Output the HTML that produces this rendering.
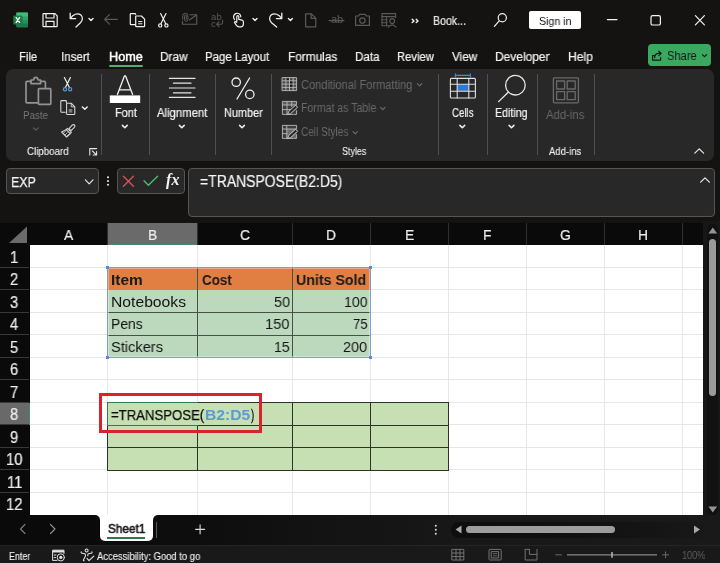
<!DOCTYPE html>
<html><head><meta charset="utf-8"><title>Excel</title>
<style>
*{box-sizing:border-box;margin:0;padding:0}
html,body{width:720px;height:563px;overflow:hidden;background:#141312;font-family:"Liberation Sans",sans-serif}
#root{position:relative;width:720px;height:563px;background:#141312;overflow:hidden}
.a{position:absolute}
.t{position:absolute;white-space:nowrap;transform-origin:0 50%;will-change:transform}
svg{position:absolute;overflow:visible}
#ribbon{position:absolute;left:6px;top:69px;width:708px;height:91.8px;background:#282828;border-radius:7px}
.sep{position:absolute;width:1px;background:#505050;top:74px;height:81px}
.box{position:absolute;background:#282828;border:1px solid #555;border-radius:4px}
.ch{position:absolute;top:223px;height:22px;background:#0a0a0a}
.vl{position:absolute;top:245px;width:1px;height:270px;background:#e7e7e7}
.hl{position:absolute;left:30px;height:1px;width:673px;background:#e7e7e7}

</style></head><body><div id="root">
<!-- ===== RIBBON PANEL ===== -->
<div id="ribbon"></div>
<div class="sep" style="left:101px"></div>
<div class="sep" style="left:149px"></div>
<div class="sep" style="left:215px"></div>
<div class="sep" style="left:270.5px"></div>
<div class="sep" style="left:438px"></div>
<div class="sep" style="left:487px"></div>
<div class="sep" style="left:536.5px"></div>
<div class="sep" style="left:594px"></div>

<!-- home underline -->
<div class="a" style="left:109px;top:64.5px;width:34px;height:2px;background:#4caf73;border-radius:1px"></div>

<!-- sign in button -->
<div class="a" style="left:528.6px;top:11.2px;width:52.6px;height:17.5px;background:#fff;border-radius:2px"></div>
<!-- share button -->
<div class="a" style="left:647.5px;top:44.3px;width:63.5px;height:21.8px;background:#3ba862;border-radius:4px"></div>

<!-- ===== FORMULA BAR ===== -->
<div class="box" style="left:6px;top:168px;width:92.5px;height:25.8px"></div>
<div class="box" style="left:117px;top:168px;width:67.5px;height:25.8px"></div>
<div class="box" style="left:188px;top:168px;width:527px;height:49px"></div>

<!-- ===== GRID ===== -->
<div class="a" style="left:0;top:223px;width:703px;height:292px;background:#fff"></div>
<div class="a" style="left:0;top:223px;width:703px;height:22px;background:#0a0a0a"></div>
<div class="a" style="left:0;top:223px;width:29.5px;height:292px;background:#0a0a0a"></div>
<div class="a" style="left:703px;top:221px;width:17px;height:296px;background:#171717"></div>
<div class="a" style="left:707.4px;top:224px;width:10.8px;height:291px;background:#111;border-radius:5.4px"></div>
<!-- selected col header B -->
<div class="a" style="left:107.5px;top:223px;width:90px;height:21.5px;background:#6a6a6a"></div>
<div class="a" style="left:107.5px;top:244px;width:90px;height:1.2px;background:#3f8f62"></div>
<!-- selected row header 8 -->
<div class="a" style="left:0;top:402.5px;width:29px;height:22.5px;background:#696969"></div>
<div class="a" style="left:28.5px;top:403px;width:1.2px;height:22px;background:#3f8f62"></div>
<div class="a" style="left:107.0px;top:223px;width:1px;height:22px;background:#303030"></div>
<div class="a" style="left:197.0px;top:223px;width:1px;height:22px;background:#303030"></div>
<div class="a" style="left:292.0px;top:223px;width:1px;height:22px;background:#303030"></div>
<div class="a" style="left:370.0px;top:223px;width:1px;height:22px;background:#303030"></div>
<div class="a" style="left:448.0px;top:223px;width:1px;height:22px;background:#303030"></div>
<div class="a" style="left:526.0px;top:223px;width:1px;height:22px;background:#303030"></div>
<div class="a" style="left:604.0px;top:223px;width:1px;height:22px;background:#303030"></div>
<div class="a" style="left:682.0px;top:223px;width:1px;height:22px;background:#303030"></div>
<div class="vl" style="left:107.0px"></div>
<div class="vl" style="left:197.0px"></div>
<div class="vl" style="left:292.0px"></div>
<div class="vl" style="left:370.0px"></div>
<div class="vl" style="left:448.0px"></div>
<div class="vl" style="left:526.0px"></div>
<div class="vl" style="left:604.0px"></div>
<div class="vl" style="left:682.0px"></div>
<div class="hl" style="top:266.8px"></div>
<div class="hl" style="top:289.3px"></div>
<div class="hl" style="top:311.8px"></div>
<div class="hl" style="top:334.3px"></div>
<div class="hl" style="top:356.8px"></div>
<div class="hl" style="top:379.3px"></div>
<div class="hl" style="top:401.8px"></div>
<div class="hl" style="top:424.3px"></div>
<div class="hl" style="top:446.8px"></div>
<div class="hl" style="top:469.3px"></div>
<div class="hl" style="top:491.8px"></div>
<div class="a" style="left:0;top:266.8px;width:29px;height:1px;background:#383838"></div>
<div class="a" style="left:0;top:289.3px;width:29px;height:1px;background:#383838"></div>
<div class="a" style="left:0;top:311.8px;width:29px;height:1px;background:#383838"></div>
<div class="a" style="left:0;top:334.3px;width:29px;height:1px;background:#383838"></div>
<div class="a" style="left:0;top:356.8px;width:29px;height:1px;background:#383838"></div>
<div class="a" style="left:0;top:379.3px;width:29px;height:1px;background:#383838"></div>
<div class="a" style="left:0;top:401.8px;width:29px;height:1px;background:#383838"></div>
<div class="a" style="left:0;top:424.3px;width:29px;height:1px;background:#383838"></div>
<div class="a" style="left:0;top:446.8px;width:29px;height:1px;background:#383838"></div>
<div class="a" style="left:0;top:469.3px;width:29px;height:1px;background:#383838"></div>
<div class="a" style="left:0;top:491.8px;width:29px;height:1px;background:#383838"></div>
<!-- corner triangle -->
<svg style="left:0;top:223px" width="30" height="22"><path d="M27 3.5 L27 20 L9 20 Z" fill="#6b6b6b"/></svg>

<!-- ===== TABLE 1 ===== -->
<div class="a" style="left:108px;top:267.5px;width:262.5px;height:22.5px;background:#e07f41"></div>
<div class="a" style="left:108px;top:290px;width:262.5px;height:67.5px;background:#bcd8bd"></div>
<!-- inner borders -->
<div class="a" style="left:197px;top:267.5px;width:1px;height:90px;background:#455347"></div>
<div class="a" style="left:292px;top:267.5px;width:1px;height:90px;background:#455347"></div>
<div class="a" style="left:108px;top:312px;width:262.5px;height:1px;background:#455347"></div>
<div class="a" style="left:108px;top:334.5px;width:262.5px;height:1px;background:#455347"></div>
<!-- blue range border -->
<div class="a" style="left:107px;top:266.5px;width:264px;height:91.5px;border:1.4px solid #7d9cd9;box-shadow:inset 0 0 0 0.8px rgba(255,255,255,.45)"></div>
<div class="a" style="left:106.2px;top:266.1px;width:3.2px;height:3.2px;background:#5f86d2"></div>
<div class="a" style="left:368.8px;top:266.1px;width:3.2px;height:3.2px;background:#5f86d2"></div>
<div class="a" style="left:106.2px;top:355.8px;width:3.2px;height:3.2px;background:#5f86d2"></div>
<div class="a" style="left:368.8px;top:355.8px;width:3.2px;height:3.2px;background:#5f86d2"></div>

<!-- ===== TABLE 2 ===== -->
<div class="a" style="left:107.5px;top:402.5px;width:341px;height:67.5px;background:#c6e0b4"></div>
<div class="a" style="left:107px;top:402px;width:342px;height:68.5px;border:1px solid #2d3328"></div>
<div class="a" style="left:107px;top:424.8px;width:342px;height:1px;background:#2d3328"></div>
<div class="a" style="left:107px;top:447.3px;width:342px;height:1px;background:#2d3328"></div>
<div class="a" style="left:197px;top:425px;width:1px;height:45px;background:#2d3328"></div>
<div class="a" style="left:292px;top:402px;width:1px;height:68px;background:#2d3328"></div>
<div class="a" style="left:370px;top:402px;width:1px;height:68px;background:#2d3328"></div>
<!-- active cell B8 -->
<div class="a" style="left:107px;top:402px;width:90.5px;height:24px;border:1.5px solid #2f7d4f;border-right:none"></div>
<!-- red highlight box -->
<div class="a" style="left:98.8px;top:393px;width:163.2px;height:39.5px;border:3px solid #d8232d"></div>

<!-- ===== SHEET TAB BAR ===== -->
<div class="a" style="left:90px;top:515px;width:75px;height:8px;background:#fff"></div>
<div class="a" style="left:0;top:515.3px;width:100.2px;height:29.7px;background:#0a0a0a;border-radius:0 5px 0 0"></div>
<div class="a" style="left:152.8px;top:515.3px;width:567.2px;height:29.7px;background:linear-gradient(90deg,#0c0c0c 0%,#0d0d0d 5%,#181818 55%,#191919 100%);border-radius:5px 0 0 0"></div>
<div class="a" style="left:100px;top:541px;width:53px;height:4px;background:#0b0b0b"></div>
<div class="a" style="left:100px;top:515px;width:53px;height:26px;background:#fff;border-radius:0 0 5px 5px"></div>
<div class="a" style="left:107.2px;top:536.6px;width:37.6px;height:2px;background:#2a7a4b"></div>
<div class="a" style="left:156px;top:521.7px;width:1px;height:16.3px;background:#5a5a5a"></div>
<svg style="left:0;top:515px" width="720" height="30" fill="none" stroke-linecap="round" stroke-linejoin="round">
 <path d="M25 9.5 L20.5 14 L25 18.5" stroke="#7c7c7c" stroke-width="1.1"/>
 <path d="M50.5 9.5 L55 14 L50.5 18.5" stroke="#8c8c8c" stroke-width="1.2"/>
 <path d="M195.6 14.3 H204.6 M200.1 9.8 V18.8" stroke="#d8d8d8" stroke-width="1.15"/>
 <circle cx="435.8" cy="10.8" r="1" fill="#e0e0e0"/><circle cx="435.8" cy="14.8" r="1" fill="#e0e0e0"/><circle cx="435.8" cy="18.8" r="1" fill="#e0e0e0"/>
</svg>
<!-- h scrollbar -->
<div class="a" style="left:451px;top:521.5px;width:254px;height:16px;background:linear-gradient(90deg,#0d0d0d 0%,#101010 50%,#181818 100%);border-radius:8px 0 0 8px"></div>
<div class="a" style="left:466px;top:525.8px;width:149px;height:7.6px;background:#9d9d9d;border-radius:4px"></div>
<svg style="left:0;top:515px" width="720" height="30"><path d="M461.5 10.5 L461.5 18.5 L455.5 14.5 Z" fill="#a8a8a8"/><path d="M694 10.5 L694 18.5 L700 14.5 Z" fill="#a8a8a8"/></svg>
<!-- v scrollbar -->
<div class="a" style="left:709.2px;top:238.6px;width:7.2px;height:157.4px;background:#9a9a9a;border-radius:3.6px"></div>
<svg style="left:0;top:0" width="720" height="563"><path d="M708.4 233.6 L717.2 233.6 L712.8 227.6 Z" fill="#959595"/><path d="M708.4 506.4 L717.2 506.4 L712.8 512.4 Z" fill="#959595"/></svg>

<!-- ===== STATUS BAR ===== -->
<div class="a" style="left:0;top:544.5px;width:720px;height:18.5px;background:#191919;border-top:1px solid #242424"></div>
<!-- ===== TITLE BAR ICONS ===== -->
<svg style="left:0;top:0" width="720" height="40" fill="none" stroke-linecap="round" stroke-linejoin="round">
 <!-- excel -->
 <rect x="16.4" y="12.6" width="11.6" height="14.6" rx="1.2" fill="#2fa565"/>
 <rect x="16.4" y="12.6" width="11.6" height="3.8" fill="#3dbd78"/>
 <rect x="16.4" y="20" width="11.6" height="3.6" fill="#23925a"/>
 <rect x="16.4" y="23.6" width="11.6" height="3.6" rx="1" fill="#1b7a49"/>
 <rect x="13.3" y="15.4" width="9.2" height="9.2" rx="1" fill="#1d7a49"/>
 <path d="M16.2 17.6 L19.6 22.4 M19.6 17.6 L16.2 22.4" stroke="#fff" stroke-width="1.3"/>
 <!-- save -->
 <g stroke="#f0f0f0" stroke-width="1.2">
  <path d="M43 14.2 Q43 13.6 43.6 13.6 H55 L57.2 15.8 V26 Q57.2 26.6 56.6 26.6 H43.6 Q43 26.6 43 26 Z"/>
  <path d="M46 13.8 V18 H54 V13.8"/>
  <path d="M46 26.4 V21.4 H54 V26.4"/>
 </g>
 <!-- undo -->
 <g stroke="#f0f0f0" stroke-width="1.3">
  <path d="M70.2 13.2 V18.6 H75.6"/>
  <path d="M70.6 18.2 C73 14.4 77.6 12.6 80.6 14.8 C83.4 17 82.6 20.6 80.4 22.8 L76 27"/>
  <path d="M89 18.6 L91 20.6 L93 18.6" stroke-width="1.4"/>
 </g>
 <!-- back arrow dim -->
 <g stroke="#5a5a5a" stroke-width="1.2">
  <path d="M104.6 19.4 H117.2 M109.4 14.6 L104.6 19.4 L109.4 24.2"/>
 </g>
 <!-- copy -->
 <g stroke="#f0f0f0" stroke-width="1.2">
  <path d="M135.4 24.6 H131 Q130.3 24.6 130.3 23.9 V14.3 Q130.3 13.6 131 13.6 H135 Q135.6 13.6 135.6 14.3"/>
  <path d="M136 16 H141.4 L144.6 19.2 V25.9 Q144.6 26.6 143.9 26.6 H136.4 Q135.7 26.6 135.7 25.9 V16.3 Z"/>
  <path d="M138.6 21.6 H142 M138.6 23.8 H142" stroke-width="1"/>
 </g>
 <!-- scissors -->
 <g stroke="#f0f0f0" stroke-width="1.2">
  <path d="M160.6 13.6 L165.6 23.6 M166 13.6 L161 23.6"/>
  <circle cx="160.2" cy="25.4" r="1.6"/><circle cx="166.4" cy="25.4" r="1.6"/>
 </g>
 <!-- mail w/ clip dim -->
 <g stroke="#5c5c5c" stroke-width="1.1">
  <path d="M190 14.7 H196.7 V24.3 H182.5 V21.4"/>
  <path d="M196.4 15 L189.4 20"/>
  <path d="M182.7 19.4 V15.8 Q182.7 13.3 185.3 13.3 Q187.9 13.3 187.9 15.8 V19.4 Q187.9 21.3 186.2 21.3 Q184.5 21.3 184.5 19.4 V16.2 Q184.5 15 185.4 15 Q186.3 15 186.3 16.2 V19.2" stroke-width="1"/>
 </g>
 <!-- touch -->
 <g stroke="#f0f0f0" stroke-width="1.2">
  <path d="M234.6 19.6 C233 17.8 233.2 14.8 235.6 13.6 C238 12.6 240.8 14 240.8 16.8"/>
  <path d="M236.8 21.6 V16.6 Q236.8 15.6 237.8 15.6 Q238.8 15.6 238.8 16.6 V19.4 L242.2 20.2 Q243.4 20.6 243.4 21.8 V24 Q243.4 26.8 240.6 26.8 H239 Q237.4 26.8 236.4 25.4 L234.4 22.4 Q235.4 21 236.8 22.4"/>
  <path d="M253 18.6 L255 20.6 L257 18.6" stroke-width="1.4"/>
 </g>
 <!-- redo -->
 <g stroke="#f0f0f0" stroke-width="1.3">
  <path d="M281.8 13.2 V18.6 H276.4"/>
  <path d="M281.4 18.2 C279 14.4 274.4 12.6 271.4 14.8 C268.6 17 269.4 20.6 271.6 22.8 L276.6 27"/>
  <path d="M288.4 18.6 L290.4 20.6 L292.4 18.6" stroke-width="1.4"/>
 </g>
 <!-- new doc dim -->
 <g stroke="#5a5a5a" stroke-width="1.2">
  <path d="M305.6 13.8 H311.4 L315.8 18.2 V26.8 H305.6 Z"/>
  <path d="M311.2 14 V18.4 H315.6"/>
 </g>
 <!-- camera dim -->
 <g stroke="#5a5a5a" stroke-width="1.2">
  <path d="M355.6 16 H358.6 L359.6 14.4 H365.2 L366.2 16 H369.4 V25.4 H355.6 Z"/>
  <circle cx="362.4" cy="20.6" r="2.7"/>
 </g>
 <!-- table w/ person dim -->
 <g stroke="#5a5a5a" stroke-width="1.1">
  <path d="M389 25.8 H382 V13.6 H395.6 V17.4"/>
  <path d="M382 16.6 H395.6 M382 19.8 H387 M382 22.8 H387 M386.6 16.6 V25.8"/>
  <circle cx="392.2" cy="21" r="2.4"/>
  <path d="M388.4 27.2 Q392.2 22.6 396 27.2"/>
 </g>
 <!-- >> -->
 <g stroke="#f4f4f4" stroke-width="1.4">
  <path d="M412.2 19.2 L414 20.9 L412.2 22.6 M416.2 19.2 L418 20.9 L416.2 22.6"/>
 </g>
 <!-- search -->
 <g stroke="#f0f0f0" stroke-width="1.2">
  <circle cx="502.3" cy="17.8" r="4.1"/>
  <path d="M499.2 20.9 L494.4 26.4"/>
 </g>
 <!-- window controls -->
 <g stroke="#f4f4f4" stroke-width="1.2">
  <path d="M607.4 19.6 H617"/>
  <rect x="651" y="15.6" width="9.4" height="9.4" rx="1.6"/>
  <path d="M695.4 15.6 L704.4 24.8 M704.4 15.6 L695.4 24.8"/>
 </g>
</svg>
<!-- dim text icons -->
<div class="t" style="left:211px;top:12.4px;font-size:9.5px;line-height:9px;color:#5a5a5a;letter-spacing:0.3px">ab</div>
<div class="t" style="left:211px;top:19.4px;font-size:9.5px;line-height:9px;color:#5a5a5a">c</div>
<svg style="left:0;top:0" width="720" height="40" fill="none" stroke="#5a5a5a" stroke-width="1.1" stroke-linecap="round" stroke-linejoin="round">
 <path d="M222.6 20.2 V22.4 Q222.6 24.2 220.8 24.2 H216.8 M219 21.8 L216.6 24.2 L219 26.6"/>
 <path d="M329 20.6 H344"/>
</svg>
<div class="t" style="left:331px;top:14.2px;font-size:11px;line-height:11px;color:#5a5a5a">ab</div>
<!-- ===== RIBBON ICONS ===== -->
<svg style="left:0;top:0" width="720" height="170" fill="none" stroke-linecap="round" stroke-linejoin="round">
 <!-- paste (dim) -->
 <g stroke="#929292" stroke-width="1.7">
  <path d="M38 102.8 H27 Q26 102.8 26 101.8 V82.4 Q26 81.4 27 81.4 H31"/>
  <path d="M40.6 81.4 H44.4 Q45.4 81.4 45.4 82.4 V88"/>
  <path d="M31 83.6 V80 H33.6 Q33.8 77.4 35.8 77.4 Q37.8 77.4 38 80 H40.6 V83.6 Z"/>
  <rect x="38.4" y="88.6" width="12.4" height="15.8" rx="0.8"/>
 </g>
 <path d="M33.4 127.8 L35.8 130.2 L38.2 127.8" stroke="#5e5e5e" stroke-width="1.2"/>
 <!-- scissors -->
 <g stroke="#f0f0f0" stroke-width="1.2">
  <path d="M64.4 77.6 L69.4 87.4 M70.4 77.6 L65.4 87.4"/>
 </g>
 <g stroke="#5b9bd5" stroke-width="1.2">
  <circle cx="65" cy="89.2" r="1.6"/><circle cx="70.1" cy="89.2" r="1.6"/>
 </g>
 <!-- copy -->
 <g stroke="#dcdcdc" stroke-width="1.05">
  <path d="M65.2 112.2 H61.6 Q60.8 112.2 60.8 111.4 V101.4 Q60.8 100.6 61.6 100.6 H65.6 Q66.4 100.6 66.4 101.4 V102.4"/>
  <path d="M67.2 103.2 H71.2 L74.8 106.8 V113.8 Q74.8 114.4 74.2 114.4 H67.2 Q66.6 114.4 66.6 113.8 V103.8 Q66.6 103.2 67.2 103.2 Z"/>
  <path d="M71.2 103.4 V106.8 H74.6" stroke-width="0.9"/>
 </g>
 <rect x="68.7" y="109" width="3.6" height="3.6" fill="#7e7e7e"/>
 <path d="M82.4 107 L84.8 109.3 L87.2 107" stroke="#f0f0f0" stroke-width="1.5"/>
 <!-- format painter -->
 <g stroke="#d8d8d8" stroke-width="1.1">
  <path d="M74.4 125 Q75.6 126.2 74.4 127.4 L71 130.6 L69 128.6 L72.2 125.2 Q73.4 124 74.4 125 Z"/>
  <path d="M67.4 128.4 L71.4 132.4 L70.2 133.6 L66.2 129.6 Z"/>
  <path d="M66 129.8 L61.6 132 L66.6 137 L70 133.8"/>
  <path d="M63.6 133 L65.4 131.4 M65.2 134.8 L67.2 132.8 M66.8 136.2 L68.6 134.4" stroke-width="0.8"/>
 </g>
 <!-- launcher -->
 <g stroke="#e8e8e8" stroke-width="1.1">
  <path d="M96.6 148.6 H89.8 V155"/>
  <path d="M92.4 151 L96.4 154.8 M96.6 151.6 V155 H93.2"/>
 </g>
 <!-- Font A -->
 <g stroke="#f0f0f0" stroke-width="1.3">
  <path d="M117.4 94.4 L124.4 76 H125.6 L132.6 94.4 M119.4 89.8 H130.6"/>
 </g>
 <rect x="109.8" y="95.4" width="30.4" height="7.6" fill="#fff"/>
 <path d="M122.4 125.4 L124.8 127.8 L127.2 125.4" stroke="#f0f0f0" stroke-width="1.5"/>
 <!-- Alignment -->
 <g stroke="#e4e4e4" stroke-width="1.2">
  <path d="M169.4 78.4 H195 M173.4 83.2 H191 M169.4 88 H195 M173.4 92.8 H191 M169.4 97.4 H195"/>
 </g>
 <path d="M179.4 125.4 L181.8 127.8 L184.2 125.4" stroke="#f0f0f0" stroke-width="1.5"/>
 <!-- Number % -->
 <g stroke="#f0f0f0" stroke-width="1.3">
  <circle cx="236.2" cy="82.2" r="4.2"/>
  <circle cx="249.8" cy="94.4" r="4.2"/>
  <path d="M249.6 78 L237 99"/>
 </g>
 <path d="M239.6 125.4 L242 127.8 L244.4 125.4" stroke="#f0f0f0" stroke-width="1.5"/>
 <!-- Styles icons (dim) -->
 <rect x="282.4" y="77.6" width="14.2" height="13" fill="#4a4a4a"/>
 <rect x="289.4" y="80.8" width="3.8" height="6.6" fill="#161616"/>
 <rect x="286" y="77.8" width="3.4" height="3" fill="#222"/>
 <g stroke="#b4b4b4" stroke-width="0.95">
  <rect x="282.4" y="77.6" width="14.2" height="13"/>
  <path d="M282.4 80.8 H296.6 M282.4 84.1 H296.6 M282.4 87.4 H296.6 M285.9 77.6 V90.6 M289.5 77.6 V90.6 M293.1 77.6 V90.6"/>
 </g>
 <rect x="282.4" y="101.4" width="14.2" height="13" fill="#3c3c3c"/>
 <rect x="282.6" y="101.6" width="13.8" height="3.4" fill="#5a5a5a"/>
 <g stroke="#b4b4b4" stroke-width="0.95">
  <path d="M293 114.4 H282.4 V101.4 H296.6 V104.2"/>
  <path d="M282.4 105 H296.6 M282.4 109.6 H290.4 M287 101.4 V114.4 M291.8 101.4 V106.4 M296.6 110.6 V114.4 H294"/>
 </g>
 <rect x="282.4" y="125.4" width="14.2" height="13" fill="#3c3c3c"/>
 <rect x="287" y="129" width="9.4" height="9.2" fill="#6c6c6c"/>
 <g stroke="#b4b4b4" stroke-width="0.95">
  <path d="M293 138.4 H282.4 V125.4 H296.6 V128.2"/>
  <path d="M282.4 129 H296.6 M286.8 125.4 V138.4 M296.6 134.6 V138.4 H294 M282.4 133.6 H286.8"/>
 </g>
 <g stroke="#d0d0d0" stroke-width="0.95" fill="#262626">
  <path d="M295.8 105.4 L297.6 107.2 L290.6 113.6 L287.6 114.6 L288.6 111.8 Z"/>
  <path d="M295.8 129.4 L297.6 131.2 L290.6 137.6 L287.6 138.6 L288.6 135.8 Z"/>
 </g>
 <g stroke="#6f6f6f" stroke-width="1.1">
  <path d="M417.4 83.6 L419.6 85.8 L421.8 83.6"/>
  <path d="M380.6 107.4 L382.8 109.6 L385 107.4"/>
  <path d="M353 131.6 L355.2 133.8 L357.4 131.6"/>
 </g>
 <!-- Cells -->
 <path d="M455.4 75.4 H470.4 M455.4 73.8 V77 M470.4 73.8 V77" stroke="#3a8fd9" stroke-width="1.1"/>
 <rect x="457.2" y="84.2" width="11.6" height="7" fill="#2b7bd4"/>
 <g stroke="#e0e0e0" stroke-width="1.1">
  <rect x="450.4" y="78.4" width="25" height="19.6" rx="1"/>
  <path d="M450.4 84.2 H475.4 M450.4 91.2 H475.4 M457.2 78.4 V98 M468.8 78.4 V98"/>
 </g>
 <path d="M459.9 125.4 L462.3 127.8 L464.7 125.4" stroke="#f0f0f0" stroke-width="1.5"/>
 <!-- Editing magnifier -->
 <g stroke="#e8e8e8" stroke-width="1.3">
  <circle cx="515.4" cy="85.2" r="9.8"/>
  <path d="M508.2 92.2 L498.6 101.6"/>
 </g>
 <path d="M509.1 125.4 L511.5 127.8 L513.9 125.4" stroke="#f0f0f0" stroke-width="1.5"/>
 <!-- Add-ins (dim) -->
 <g stroke="#6a6a6a" stroke-width="1.3">
  <rect x="553.4" y="77.8" width="25" height="25" rx="1"/>
  <rect x="556.6" y="81" width="8" height="8"/>
  <rect x="567.2" y="81" width="8" height="8"/>
  <rect x="556.6" y="91.6" width="8" height="8"/>
  <rect x="567.2" y="91.6" width="8" height="8"/>
 </g>
 <!-- collapse ribbon -->
 <path d="M694.8 153.2 L699.2 148.8 L703.6 153.2" stroke="#e8e8e8" stroke-width="1.2"/>
</svg>
<!-- ===== FORMULA BAR ICONS ===== -->
<svg style="left:0;top:160px" width="720" height="60" fill="none" stroke-linecap="round" stroke-linejoin="round">
 <path d="M85.4 19.8 L89.2 23.8 L93 19.8" stroke="#e4e4e4" stroke-width="1.2"/>
 <circle cx="108" cy="17.2" r="1" fill="#f0f0f0"/><circle cx="108" cy="21" r="1" fill="#f0f0f0"/><circle cx="108" cy="24.8" r="1" fill="#f0f0f0"/>
 <path d="M123.4 16.2 L133.4 26.2 M133.4 16.2 L123.4 26.2" stroke="#d9535a" stroke-width="1.3"/>
 <path d="M144 20.8 L148.4 25.2 L157.6 16.2" stroke="#4fbf6f" stroke-width="1.3"/>
 <path d="M700.6 22.2 L705 17.8 L709.4 22.2" stroke="#e8e8e8" stroke-width="1.2"/>
</svg>
<div class="t" style="left:166.2px;top:171px;font-family:'Liberation Serif',serif;font-style:italic;font-weight:bold;font-size:16px;line-height:18px;color:#f4f4f4;letter-spacing:0.2px">fx</div>

<!-- ===== SHARE ICONS ===== -->
<svg style="left:0;top:40px" width="720" height="30" fill="none" stroke="#0e1a12" stroke-width="1.2" stroke-linecap="round" stroke-linejoin="round">
 <path d="M654.4 15.6 H652.6 V20.2 H660.6 V17.6"/>
 <path d="M654.6 17.6 Q655 13.6 658.4 13.4 H660.6 M658.8 11.2 L661.2 13.4 L658.8 15.6"/>
 <path d="M702.4 14.6 L704.5 16.7 L706.6 14.6"/>
</svg>

<!-- ===== STATUS BAR ICONS ===== -->
<svg style="left:0;top:540px" width="720" height="23" fill="none" stroke-linecap="round" stroke-linejoin="round">
 <!-- macro record -->
 <g stroke="#e4e4e4" stroke-width="1">
  <path d="M57 20.4 H52.6 V10.2 H64 V13.4"/>
  <path d="M52.6 11.4 H64" stroke-width="2.2" stroke-linecap="butt"/>
  <path d="M54.2 15 H56 M54.2 17.6 H55.6"/>
  <circle cx="60.8" cy="17.4" r="3.6"/>
 </g>
 <circle cx="60.8" cy="17.4" r="1.6" fill="#e4e4e4"/>
 <!-- accessibility -->
 <g stroke="#e4e4e4" stroke-width="1.05">
  <circle cx="86.6" cy="10.4" r="1.5"/>
  <path d="M81.2 11.8 Q80.8 13 82 13.2 L84.8 13.8 Q85.4 14 85.4 14.8 V16.2 L83.4 20 Q83.2 21 84.2 20.8"/>
  <path d="M92 11.8 Q92.4 13 91.2 13.2 L88.4 13.8 Q87.8 14 87.8 14.8 V15.8"/>
  <path d="M87 18.4 L89 20.6 L93.8 16.2" stroke-width="1.15"/>
 </g>
 <!-- view buttons -->
 <g stroke="#727272" stroke-width="1">
  <rect x="452.2" y="9.4" width="11.6" height="10.6"/>
  <path d="M452.2 13 H463.8 M452.2 16.6 H463.8 M456 9.4 V20 M460 9.4 V20"/>
  <rect x="489" y="9.4" width="12.2" height="10.6" rx="1"/>
  <rect x="491.6" y="11.6" width="7" height="6.4"/>
  <path d="M493.2 13.6 H497 M493.2 15.8 H497" stroke-width="0.8"/>
  <path d="M525.2 9.4 V20 H537 V9.4"/>
  <path d="M529.4 9.4 V14.4 H537 M525.2 9.4 H529.4"/>
 </g>
 <g stroke="#6a6a6a" stroke-width="1">
  <path d="M555.8 14.8 H561.4"/>
  <path d="M662.6 14.8 H668.6 M665.6 11.8 V17.8"/>
 </g>
 <path d="M567.4 14.9 H656.6" stroke="#a4a4a4" stroke-width="1"/>
 <path d="M612 12 V17.8" stroke="#b0b0b0" stroke-width="1.6" stroke-linecap="butt"/>
</svg>

<div class="t" style="left:433px;top:13.00px;font-family:'Liberation Sans', sans-serif;font-size:12px;line-height:16px;color:#e8e8e8;font-weight:normal;transform:scaleX(0.8833);-webkit-text-stroke:0.22px #e8e8e8;">Book...</div>
<div class="t" style="left:539px;top:14.00px;font-family:'Liberation Sans', sans-serif;font-size:11px;line-height:14px;color:#111;font-weight:normal;transform:scaleX(0.9661);">Sign in</div>
<div class="t" style="left:18.7px;top:49.00px;font-family:'Liberation Sans', sans-serif;font-size:12.5px;line-height:16px;color:#f2f2f2;font-weight:normal;transform:scaleX(0.8980);-webkit-text-stroke:0.22px #f2f2f2;">File</div>
<div class="t" style="left:61.2px;top:49.00px;font-family:'Liberation Sans', sans-serif;font-size:12.5px;line-height:16px;color:#f2f2f2;font-weight:normal;transform:scaleX(0.9211);-webkit-text-stroke:0.22px #f2f2f2;">Insert</div>
<div class="t" style="left:108.7px;top:49.00px;font-family:'Liberation Sans', sans-serif;font-size:12.5px;line-height:16px;color:#fff;font-weight:normal;transform:scaleX(1.0137);-webkit-text-stroke:0.45px #fff;">Home</div>
<div class="t" style="left:159.5px;top:49.00px;font-family:'Liberation Sans', sans-serif;font-size:12.5px;line-height:16px;color:#f2f2f2;font-weight:normal;transform:scaleX(0.9427);-webkit-text-stroke:0.22px #f2f2f2;">Draw</div>
<div class="t" style="left:205px;top:49.00px;font-family:'Liberation Sans', sans-serif;font-size:12.5px;line-height:16px;color:#f2f2f2;font-weight:normal;transform:scaleX(0.9159);-webkit-text-stroke:0.22px #f2f2f2;">Page Layout</div>
<div class="t" style="left:288.2px;top:49.00px;font-family:'Liberation Sans', sans-serif;font-size:12.5px;line-height:16px;color:#f2f2f2;font-weight:normal;transform:scaleX(0.9464);-webkit-text-stroke:0.22px #f2f2f2;">Formulas</div>
<div class="t" style="left:355px;top:49.00px;font-family:'Liberation Sans', sans-serif;font-size:12.5px;line-height:16px;color:#f2f2f2;font-weight:normal;transform:scaleX(0.9278);-webkit-text-stroke:0.22px #f2f2f2;">Data</div>
<div class="t" style="left:397px;top:49.00px;font-family:'Liberation Sans', sans-serif;font-size:12.5px;line-height:16px;color:#f2f2f2;font-weight:normal;transform:scaleX(0.8976);-webkit-text-stroke:0.22px #f2f2f2;">Review</div>
<div class="t" style="left:451.7px;top:49.00px;font-family:'Liberation Sans', sans-serif;font-size:12.5px;line-height:16px;color:#f2f2f2;font-weight:normal;transform:scaleX(0.9414);-webkit-text-stroke:0.22px #f2f2f2;">View</div>
<div class="t" style="left:495px;top:49.00px;font-family:'Liberation Sans', sans-serif;font-size:12.5px;line-height:16px;color:#f2f2f2;font-weight:normal;transform:scaleX(0.9564);-webkit-text-stroke:0.22px #f2f2f2;">Developer</div>
<div class="t" style="left:568px;top:49.00px;font-family:'Liberation Sans', sans-serif;font-size:12.5px;line-height:16px;color:#f2f2f2;font-weight:normal;transform:scaleX(0.9721);-webkit-text-stroke:0.22px #f2f2f2;">Help</div>
<div class="t" style="left:666.6px;top:48.00px;font-family:'Liberation Sans', sans-serif;font-size:12.3px;line-height:16px;color:#0e1a12;font-weight:normal;transform:scaleX(0.9017);">Share</div>
<div class="t" style="left:23.3px;top:108.00px;font-family:'Liberation Sans', sans-serif;font-size:11.5px;line-height:14px;color:#777;font-weight:normal;transform:scaleX(0.8497);">Paste</div>
<div class="t" style="left:26.7px;top:144.00px;font-family:'Liberation Sans', sans-serif;font-size:11px;line-height:14px;color:#f2f2f2;font-weight:normal;transform:scaleX(0.8833);-webkit-text-stroke:0.12px #f2f2f2;">Clipboard</div>
<div class="t" style="left:114.6px;top:105.00px;font-family:'Liberation Sans', sans-serif;font-size:12px;line-height:16px;color:#f2f2f2;font-weight:normal;transform:scaleX(0.9119);-webkit-text-stroke:0.22px #f2f2f2;">Font</div>
<div class="t" style="left:157.3px;top:105.00px;font-family:'Liberation Sans', sans-serif;font-size:12px;line-height:16px;color:#f2f2f2;font-weight:normal;transform:scaleX(0.9443);-webkit-text-stroke:0.22px #f2f2f2;">Alignment</div>
<div class="t" style="left:223.7px;top:105.00px;font-family:'Liberation Sans', sans-serif;font-size:12px;line-height:16px;color:#f2f2f2;font-weight:normal;transform:scaleX(0.9089);-webkit-text-stroke:0.22px #f2f2f2;">Number</div>
<div class="t" style="left:300.7px;top:77.00px;font-family:'Liberation Sans', sans-serif;font-size:12px;line-height:16px;color:#696969;font-weight:normal;transform:scaleX(0.9219);">Conditional Formatting</div>
<div class="t" style="left:300.7px;top:100.00px;font-family:'Liberation Sans', sans-serif;font-size:12px;line-height:16px;color:#696969;font-weight:normal;transform:scaleX(0.8773);">Format as Table</div>
<div class="t" style="left:300.7px;top:124.00px;font-family:'Liberation Sans', sans-serif;font-size:12px;line-height:16px;color:#696969;font-weight:normal;transform:scaleX(0.8344);">Cell Styles</div>
<div class="t" style="left:342px;top:144.00px;font-family:'Liberation Sans', sans-serif;font-size:11px;line-height:14px;color:#f2f2f2;font-weight:normal;transform:scaleX(0.8108);-webkit-text-stroke:0.12px #f2f2f2;">Styles</div>
<div class="t" style="left:451.7px;top:105.00px;font-family:'Liberation Sans', sans-serif;font-size:12px;line-height:16px;color:#f2f2f2;font-weight:normal;transform:scaleX(0.8061);-webkit-text-stroke:0.22px #f2f2f2;">Cells</div>
<div class="t" style="left:495.4px;top:105.00px;font-family:'Liberation Sans', sans-serif;font-size:12px;line-height:16px;color:#f2f2f2;font-weight:normal;transform:scaleX(0.8882);-webkit-text-stroke:0.22px #f2f2f2;">Editing</div>
<div class="t" style="left:546.4px;top:107.00px;font-family:'Liberation Sans', sans-serif;font-size:12px;line-height:16px;color:#696969;font-weight:normal;transform:scaleX(0.9413);">Add-ins</div>
<div class="t" style="left:548.8px;top:144.00px;font-family:'Liberation Sans', sans-serif;font-size:11px;line-height:14px;color:#f2f2f2;font-weight:normal;transform:scaleX(0.8633);-webkit-text-stroke:0.12px #f2f2f2;">Add-ins</div>
<div class="t" style="left:11.3px;top:172.00px;font-family:'Liberation Sans', sans-serif;font-size:15px;line-height:19px;color:#f6f6f6;font-weight:normal;transform:scaleX(0.8296);-webkit-text-stroke:0.25px #f6f6f6;">EXP</div>
<div class="t" style="left:199.6px;top:172.00px;font-family:'Liberation Sans', sans-serif;font-size:15.6px;line-height:19px;color:#f6f6f6;font-weight:normal;transform:scaleX(0.8949);-webkit-text-stroke:0.2px #f6f6f6;">=TRANSPOSE(B2:D5)</div>
<div class="t" style="left:64.18046875px;top:225.00px;font-family:'Liberation Sans', sans-serif;font-size:15.4px;line-height:19px;color:#ededed;font-weight:normal;transform:scaleX(0.9000);-webkit-text-stroke:0.22px #ededed;">A</div>
<div class="t" style="left:148.08046875px;top:225.00px;font-family:'Liberation Sans', sans-serif;font-size:15.4px;line-height:19px;color:#ededed;font-weight:normal;transform:scaleX(0.9000);-webkit-text-stroke:0.22px #ededed;">B</div>
<div class="t" style="left:239.89375px;top:225.00px;font-family:'Liberation Sans', sans-serif;font-size:15.4px;line-height:19px;color:#ededed;font-weight:normal;transform:scaleX(0.9000);-webkit-text-stroke:0.22px #ededed;">C</div>
<div class="t" style="left:326.29375px;top:225.00px;font-family:'Liberation Sans', sans-serif;font-size:15.4px;line-height:19px;color:#ededed;font-weight:normal;transform:scaleX(0.9000);-webkit-text-stroke:0.22px #ededed;">D</div>
<div class="t" style="left:404.68046875px;top:225.00px;font-family:'Liberation Sans', sans-serif;font-size:15.4px;line-height:19px;color:#ededed;font-weight:normal;transform:scaleX(0.9000);-webkit-text-stroke:0.22px #ededed;">E</div>
<div class="t" style="left:483.0671875px;top:225.00px;font-family:'Liberation Sans', sans-serif;font-size:15.4px;line-height:19px;color:#ededed;font-weight:normal;transform:scaleX(0.9000);-webkit-text-stroke:0.22px #ededed;">F</div>
<div class="t" style="left:559.9070312499999px;top:225.00px;font-family:'Liberation Sans', sans-serif;font-size:15.4px;line-height:19px;color:#ededed;font-weight:normal;transform:scaleX(0.9000);-webkit-text-stroke:0.22px #ededed;">G</div>
<div class="t" style="left:638.2937499999999px;top:225.00px;font-family:'Liberation Sans', sans-serif;font-size:15.4px;line-height:19px;color:#ededed;font-weight:normal;transform:scaleX(0.9000);-webkit-text-stroke:0.22px #ededed;">H</div>
<div class="t" style="left:10.403125px;top:248.00px;font-family:'Liberation Sans', sans-serif;font-size:16px;line-height:19px;color:#ededed;font-weight:normal;transform:scaleX(0.9200);-webkit-text-stroke:0.22px #ededed;">1</div>
<div class="t" style="left:10.403125px;top:270.00px;font-family:'Liberation Sans', sans-serif;font-size:16px;line-height:19px;color:#ededed;font-weight:normal;transform:scaleX(0.9200);-webkit-text-stroke:0.22px #ededed;">2</div>
<div class="t" style="left:10.403125px;top:293.00px;font-family:'Liberation Sans', sans-serif;font-size:16px;line-height:19px;color:#ededed;font-weight:normal;transform:scaleX(0.9200);-webkit-text-stroke:0.22px #ededed;">3</div>
<div class="t" style="left:10.403125px;top:315.00px;font-family:'Liberation Sans', sans-serif;font-size:16px;line-height:19px;color:#ededed;font-weight:normal;transform:scaleX(0.9200);-webkit-text-stroke:0.22px #ededed;">4</div>
<div class="t" style="left:10.403125px;top:338.00px;font-family:'Liberation Sans', sans-serif;font-size:16px;line-height:19px;color:#ededed;font-weight:normal;transform:scaleX(0.9200);-webkit-text-stroke:0.22px #ededed;">5</div>
<div class="t" style="left:10.403125px;top:360.00px;font-family:'Liberation Sans', sans-serif;font-size:16px;line-height:19px;color:#ededed;font-weight:normal;transform:scaleX(0.9200);-webkit-text-stroke:0.22px #ededed;">6</div>
<div class="t" style="left:10.403125px;top:383.00px;font-family:'Liberation Sans', sans-serif;font-size:16px;line-height:19px;color:#ededed;font-weight:normal;transform:scaleX(0.9200);-webkit-text-stroke:0.22px #ededed;">7</div>
<div class="t" style="left:10.403125px;top:405.00px;font-family:'Liberation Sans', sans-serif;font-size:16px;line-height:19px;color:#ededed;font-weight:normal;transform:scaleX(0.9200);-webkit-text-stroke:0.22px #ededed;">8</div>
<div class="t" style="left:10.403125px;top:428.00px;font-family:'Liberation Sans', sans-serif;font-size:16px;line-height:19px;color:#ededed;font-weight:normal;transform:scaleX(0.9200);-webkit-text-stroke:0.22px #ededed;">9</div>
<div class="t" style="left:6.313437499999999px;top:450.00px;font-family:'Liberation Sans', sans-serif;font-size:16px;line-height:19px;color:#ededed;font-weight:normal;transform:scaleX(0.9200);-webkit-text-stroke:0.22px #ededed;">10</div>
<div class="t" style="left:6.8596875px;top:473.00px;font-family:'Liberation Sans', sans-serif;font-size:16px;line-height:19px;color:#ededed;font-weight:normal;transform:scaleX(0.9200);-webkit-text-stroke:0.22px #ededed;">11</div>
<div class="t" style="left:6.313437499999999px;top:495.00px;font-family:'Liberation Sans', sans-serif;font-size:16px;line-height:19px;color:#ededed;font-weight:normal;transform:scaleX(0.9200);-webkit-text-stroke:0.22px #ededed;">12</div>
<div class="t" style="left:107.6px;top:521.00px;font-family:'Liberation Sans', sans-serif;font-size:12.5px;line-height:16px;color:#1a1a1a;font-weight:normal;transform:scaleX(0.9413);-webkit-text-stroke:0.6px #1a1a1a;">Sheet1</div>
<div class="t" style="left:9.3px;top:549.00px;font-family:'Liberation Sans', sans-serif;font-size:10.5px;line-height:14px;color:#f2f2f2;font-weight:normal;transform:scaleX(0.8483);-webkit-text-stroke:0.12px #f2f2f2;">Enter</div>
<div class="t" style="left:97.2px;top:549.00px;font-family:'Liberation Sans', sans-serif;font-size:10.5px;line-height:14px;color:#f2f2f2;font-weight:normal;transform:scaleX(0.8984);-webkit-text-stroke:0.12px #f2f2f2;">Accessibility: Good to go</div>
<div class="t" style="left:681.9px;top:548.00px;font-family:'Liberation Sans', sans-serif;font-size:10.5px;line-height:14px;color:#606060;font-weight:normal;transform:scaleX(0.8675);">100%</div>
<div class="t" style="left:111px;top:270.00px;font-family:'Liberation Sans', sans-serif;font-size:15.2px;line-height:19px;color:#1a1a1a;font-weight:bold;transform:scaleX(1.0149);">Item</div>
<div class="t" style="left:201.5px;top:270.00px;font-family:'Liberation Sans', sans-serif;font-size:15.2px;line-height:19px;color:#1a1a1a;font-weight:bold;transform:scaleX(0.8800);">Cost</div>
<div class="t" style="left:295.8px;top:270.00px;font-family:'Liberation Sans', sans-serif;font-size:15.2px;line-height:19px;color:#1a1a1a;font-weight:bold;transform:scaleX(0.9348);">Units Sold</div>
<div class="t" style="left:111px;top:292.00px;font-family:'Liberation Sans', sans-serif;font-size:15.2px;line-height:19px;color:#141414;font-weight:normal;transform:scaleX(1.0329);">Notebooks</div>
<div class="t" style="left:111px;top:314.00px;font-family:'Liberation Sans', sans-serif;font-size:15.2px;line-height:19px;color:#141414;font-weight:normal;transform:scaleX(0.9155);">Pens</div>
<div class="t" style="left:111px;top:337.00px;font-family:'Liberation Sans', sans-serif;font-size:15.2px;line-height:19px;color:#141414;font-weight:normal;transform:scaleX(0.9627);">Stickers</div>
<div class="t" style="left:273.5px;top:292.00px;font-family:'Liberation Sans', sans-serif;font-size:15.2px;line-height:19px;color:#141414;font-weight:normal;transform:scaleX(0.9523);">50</div>
<div class="t" style="left:265.2px;top:314.00px;font-family:'Liberation Sans', sans-serif;font-size:15.2px;line-height:19px;color:#141414;font-weight:normal;transform:scaleX(0.9628);">150</div>
<div class="t" style="left:274px;top:337.00px;font-family:'Liberation Sans', sans-serif;font-size:15.2px;line-height:19px;color:#141414;font-weight:normal;transform:scaleX(0.9227);">15</div>
<div class="t" style="left:343.5px;top:292.00px;font-family:'Liberation Sans', sans-serif;font-size:15.2px;line-height:19px;color:#141414;font-weight:normal;transform:scaleX(0.9273);">100</div>
<div class="t" style="left:352.5px;top:314.00px;font-family:'Liberation Sans', sans-serif;font-size:15.2px;line-height:19px;color:#141414;font-weight:normal;transform:scaleX(0.8577);">75</div>
<div class="t" style="left:343px;top:337.00px;font-family:'Liberation Sans', sans-serif;font-size:15.2px;line-height:19px;color:#141414;font-weight:normal;transform:scaleX(0.9470);">200</div>
<div class="t" style="left:110.8px;top:405.00px;font-family:'Liberation Sans', sans-serif;font-size:15.2px;line-height:19px;color:#0c0c0c;font-weight:normal;transform:scaleX(0.8661);-webkit-text-stroke:0.25px #0c0c0c;">=TRANSPOSE(</div>
<div class="t" style="left:205.3px;top:405.00px;font-family:'Liberation Sans', sans-serif;font-size:15.2px;line-height:19px;color:#5b9bd5;font-weight:bold;transform:scaleX(1.0298);">B2:D5</div>
<div class="t" style="left:251.2px;top:405.00px;font-family:'Liberation Sans', sans-serif;font-size:15.2px;line-height:19px;color:#0c0c0c;font-weight:normal;transform:scaleX(0.6321);-webkit-text-stroke:0.3px #0c0c0c;">)</div>
</div></body></html>
